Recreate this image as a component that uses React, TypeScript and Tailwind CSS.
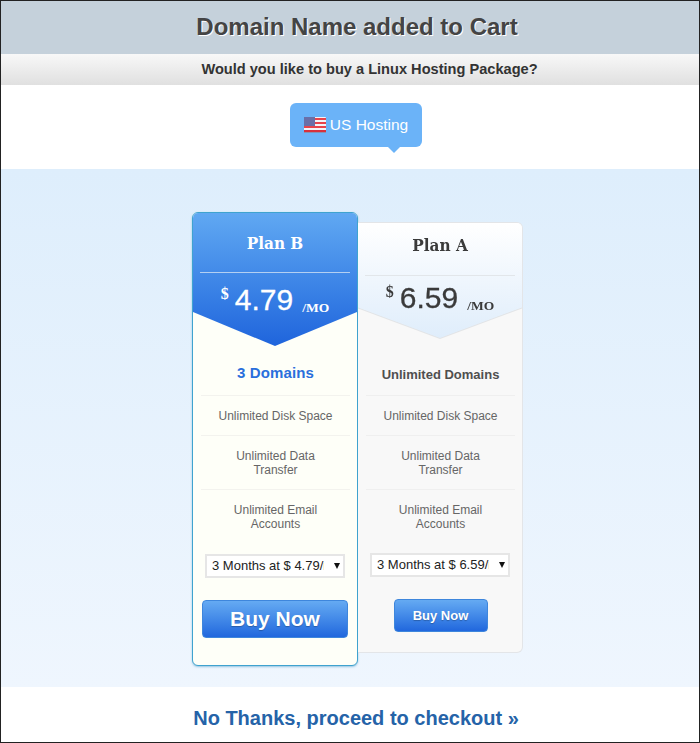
import React from "react";

function Flag() {
  return (
    <svg width="22" height="16" viewBox="0 0 22 16" className="shrink-0">
      <rect x="0" y="0" width="22" height="16" rx="1" fill="#f4f4f8" />
      <rect x="0" y="1" width="22" height="2" fill="#e8434c" />
      <rect x="0" y="5" width="22" height="2" fill="#e8434c" />
      <rect x="0" y="9" width="22" height="2" fill="#e8434c" />
      <rect x="0" y="13" width="22" height="2" fill="#d8303c" />
      <rect x="0" y="0" width="11" height="9" fill="#6a6fa8" />
      <rect x="0" y="15" width="22" height="1" fill="#8a90b0" />
    </svg>
  );
}

type PlanProps = {
  name: string;
  price: string;
  first: string;
  featured?: boolean;
};

function Plan({ name, price, first, featured }: PlanProps) {
  const rows = [
    ["Unlimited Disk Space"],
    ["Unlimited Data", "Transfer"],
    ["Unlimited Email", "Accounts"],
  ];
  return (
    <div
      className={
        featured
          ? "w-[166px] h-[454px] mt-[43px] rounded-[6px] border border-[#3fa3cf] bg-[#fefff8] shadow-[0_1px_2px_rgba(60,150,200,0.5)] overflow-hidden flex flex-col"
          : "w-[165px] h-[431px] mt-[53px] rounded-[6px] rounded-l-none border border-l-0 border-[#e3e5e8] bg-[#f8f8f8] overflow-hidden flex flex-col"
      }
    >
      <div className={featured ? "" : "drop-shadow-[0_1px_0_#e2e4e6]"}>
        <div
          className={
            featured
              ? "h-[133px] px-[7px] bg-gradient-to-b from-[#60a8f2] to-[#1f64dc] [clip-path:polygon(0_0,100%_0,100%_74.5%,50%_100%,0_74.5%)] text-white"
              : "h-[115px] px-[7px] bg-gradient-to-b from-[#ffffff] to-[#dfedfb] [clip-path:polygon(0_0,100%_0,100%_73.5%,50%_100%,0_73.5%)] text-[#3a3a3a]"
          }
        >
          <div
            className={
              featured
                ? "h-[60px] flex items-center justify-center border-b border-[#b4d0f2] text-[17px] font-bold [font-stretch:condensed] [font-family:'DejaVu_Serif',serif] pt-[2px]"
                : "h-[53px] flex items-center justify-center border-b border-[#e2e6ea] text-[17px] font-bold [font-stretch:condensed] [font-family:'DejaVu_Serif',serif] pb-[6px]"
            }
          >
            {name}
          </div>
          <div className={featured ? "flex items-start justify-center pt-[10px]" : "flex items-start justify-center pt-[5px]"}>
            <span className="text-[16px] font-bold leading-[16px] mt-[3px] mr-[6px] [font-family:'Liberation_Serif',serif]">$</span>
            <span className="text-[30px] leading-[34px] font-normal [font-family:'Liberation_Sans',sans-serif] [-webkit-text-stroke:0.3px_currentColor]">{price}</span>
            <span className="text-[13.5px] leading-[16px] mt-[17px] ml-[9px] font-bold [font-family:'Liberation_Serif',serif]">/MO</span>
          </div>
        </div>
      </div>
      <div className="pl-[8px] pr-[7px] flex flex-col items-stretch [font-family:'Liberation_Sans',sans-serif] text-center">
        <div
          className={
            featured
              ? "h-[50px] pt-[6px] flex items-center justify-center border-b border-[#f3f3ee] text-[15px] tracking-[0.15px] font-bold text-[#2a6fdc]"
              : "h-[49px] mt-[9px] pt-[7px] flex items-center justify-center border-b border-[#efefef] text-[13px] font-bold text-[#4f4f4f]"
          }
        >
          {first}
        </div>
        {rows.map((r, i) => (
          <div
            key={i}
            className={
              (i === 0 ? "h-[40px] " : "h-[54px] ") +
              (i < 2 ? (featured ? "border-b border-[#f3f3ee] " : "border-b border-[#efefef] ") : "") +
              "flex flex-col items-center justify-center text-[12px] leading-[14px] text-[#666]"
            }
          >
            {r.map((l) => (
              <span key={l}>{l}</span>
            ))}
          </div>
        ))}
      </div>
      <div className={(featured ? "mt-[10px]" : "mt-[9px]") + " mx-[12px] h-[24px] border-2 border-[#e6e6e6] bg-white flex items-center [font-family:'Liberation_Sans',sans-serif]"}>
        <select className="appearance-none w-[117px] pl-[5px] text-[13px] text-[#222] bg-white outline-none">
          <option>3 Months at $ {price}/mo</option>
        </select>
        <span className="ml-auto mr-[3px] w-0 h-0 border-x-[3.5px] border-x-transparent border-t-[6px] border-t-[#111]" />
      </div>
      <div className={(featured ? "" : "pl-[1px] ") + "flex justify-center [font-family:'Liberation_Sans',sans-serif]"}>
        <button
          className={
            featured
              ? "mt-[22px] w-[146px] h-[38px] rounded-[4px] border border-[#3e86dc] bg-gradient-to-b from-[#65aaf2] to-[#2167dd] text-white font-bold text-[21px] [text-shadow:0_1px_1px_rgba(0,0,0,0.25)]"
              : "mt-[22px] w-[94px] h-[33px] rounded-[4px] border border-[#3e86dc] bg-gradient-to-b from-[#65aaf2] to-[#2167dd] text-white font-bold text-[13px] [text-shadow:0_1px_1px_rgba(0,0,0,0.25)]"
          }
        >
          Buy Now
        </button>
      </div>
    </div>
  );
}

export default function App() {
  return (
    <div className="w-[700px] h-[743px] border border-[#222] flex flex-col bg-white [font-family:'Liberation_Sans',sans-serif]">
      <div className="h-[53px] shrink-0 bg-[#c5d1db] flex items-center justify-center pl-[14px] pb-[1px] text-[24px] font-bold text-[#444] [text-shadow:1px_1px_0_#fff]">
        Domain Name added to Cart
      </div>
      <div className="h-[31px] shrink-0 bg-gradient-to-b from-[#f8f8f8] to-[#e0e0e0] flex items-center justify-center pl-[39px] pt-[1px] text-[14.6px] font-bold text-[#333]">
        Would you like to buy a Linux Hosting Package?
      </div>
      <div className="h-[84px] shrink-0 flex justify-center pt-[18px] pl-[12px]">
        <div className="h-[44px] w-[132px] rounded-[6px] bg-[#6bb3f8] flex items-center justify-center gap-[4px] text-[15.5px] text-white relative">
          <Flag />
          <span>US Hosting</span>
          <span className="absolute top-full left-[98px] w-0 h-0 border-x-[6px] border-x-transparent border-t-[6px] border-t-[#6bb3f8]" />
        </div>
      </div>
      <div className="h-[518px] shrink-0 bg-gradient-to-b from-[#deeefc] to-[#eff6fe] flex justify-center items-start pl-[15px]">
        <Plan name="Plan B" price="4.79" first="3 Domains" featured />
        <Plan name="Plan A" price="6.59" first="Unlimited Domains" />
      </div>
      <div className="flex-1 flex items-center justify-center pl-[12px] pt-[6px] text-[20px] font-bold text-[#2563a8]">
        No Thanks, proceed to checkout »
      </div>
    </div>
  );
}
